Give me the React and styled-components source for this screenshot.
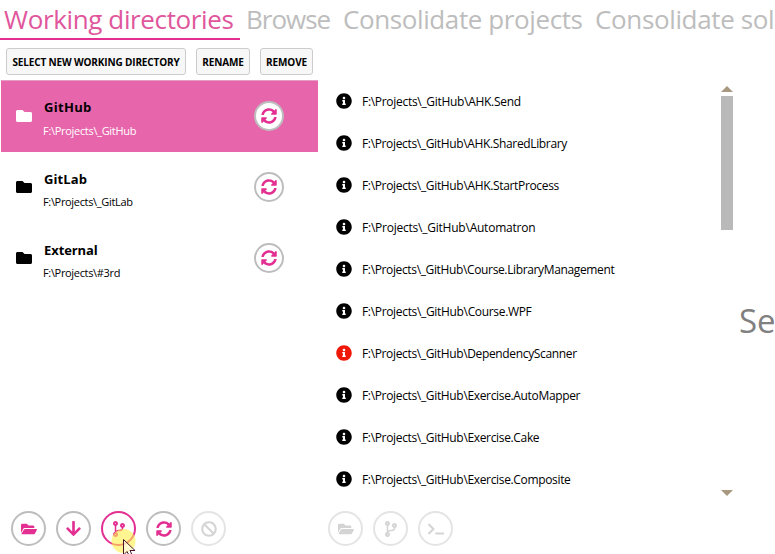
import React from "react";
import styled, { createGlobalStyle, css } from "styled-components";
import {
  FaFolder,
  FaFolderOpen,
  FaArrowDown,
  FaCodeBranch,
  FaSyncAlt,
  FaBan,
  FaTerminal,
  FaInfoCircle,
} from "react-icons/fa";

const PINK = "#e32f92";

const GlobalStyle = createGlobalStyle`
  *, *::before, *::after { box-sizing: border-box; }
  body {
    margin: 0;
    background: #fff;
    color: #000;
    font-family: "Open Sans", "Noto Sans", sans-serif;
    overflow: hidden;
  }
  svg { display: block; flex: none; }
`;

const Window = styled.div`
  position: relative;
  display: flex;
  flex-direction: column;
  width: 775px;
  height: 554px;
  background: #fff;
  overflow: hidden;
`;

const Tabs = styled.nav`
  display: flex;
  flex: none;
  height: 40px;
  white-space: nowrap;
`;

const Tab = styled.div`
  flex: none;
  width: ${(p) => p.$width}px;
  height: 40px;
  padding-left: ${(p) => p.$indent ?? 4}px;
  font-size: 26px;
  line-height: 39px;
  letter-spacing: ${(p) => p.$spacing}px;
  color: ${(p) => (p.$active ? "#e0569c" : "#bdbdbd")};
  border-bottom: 2px solid ${(p) => (p.$active ? PINK : "transparent")};
`;

const Body = styled.main`
  display: flex;
  flex: 1;
  min-height: 0;
`;

const Sidebar = styled.section`
  display: flex;
  flex-direction: column;
  flex: none;
  width: 318px;
  padding-top: 8px;
`;

const Toolbar = styled.div`
  display: flex;
  gap: 10px;
  padding-left: 6px;
  height: 32px;
`;

const TextButton = styled.button`
  width: ${(p) => p.$width}px;
  height: 27px;
  padding: 1px 0 0;
  border: 1px solid #ccc;
  border-radius: 3px;
  background: #f7f7f7;
  color: #000;
  font: bold 10px/24px "Open Sans", "Noto Sans", sans-serif;
  letter-spacing: ${(p) => p.$spacing}px;
  white-space: nowrap;
`;

const DirectoryList = styled.div`
  display: flex;
  flex-direction: column;
  flex: 1;
  padding-left: 1px;
`;

const Directory = styled.div`
  display: flex;
  align-items: center;
  height: ${(p) => (p.$selected ? 72 : 71)}px;
  padding: 0 34px 2px 15px;
  color: #000;
  > svg { color: #000; }
  ${(p) =>
    p.$selected &&
    css`
      background: #e765ab;
      border-top: 1px solid #e79cc4;
      > svg { color: #fff; }
    `}
`;

const DirectoryText = styled.div`
  flex: 1;
  padding: ${(p) => (p.$selected ? 5 : 6)}px 0 0 11px;
  white-space: nowrap;
`;

const DirectoryName = styled.div`
  padding-left: 1px;
  font-size: 13px;
  font-weight: 700;
  line-height: 20px;
  letter-spacing: ${(p) => p.$spacing}px;
`;

const DirectoryPath = styled.div`
  margin-top: ${(p) => (p.$selected ? 5 : 4)}px;
  font-size: 11px;
  line-height: 18px;
  letter-spacing: ${(p) => p.$spacing}px;
  color: ${(p) => (p.$selected ? "#fff" : "#000")};
`;

const RoundButton = styled.button`
  display: flex;
  align-items: center;
  justify-content: center;
  flex: none;
  width: ${(p) => p.$size}px;
  height: ${(p) => p.$size}px;
  padding: 0;
  border: 2px solid ${(p) => (p.$hot ? PINK : "#bdbdbd")};
  border-radius: 50%;
  background: #fff;
  color: ${PINK};
  ${(p) =>
    p.$disabled &&
    css`
      border-color: #e4e4e4;
      color: #d4d4d4;
    `}
`;

const Footer = styled.footer`
  display: flex;
  gap: 10px;
  flex: none;
  height: 43px;
  padding-left: ${(p) => p.$indent}px;
`;

const Projects = styled.section`
  display: flex;
  flex-direction: column;
  flex: none;
  width: 417px;
  padding-top: 40px;
`;

const ProjectArea = styled.div`
  display: flex;
  flex: 1;
  min-height: 0;
  padding-left: 18px;
`;

const ProjectList = styled.div`
  flex: 1;
  height: 422px;
  overflow: hidden;
`;

const Project = styled.div`
  display: flex;
  align-items: center;
  gap: 10px;
  height: 42px;
  font-size: 12px;
  letter-spacing: ${(p) => p.$spacing}px;
  white-space: nowrap;
  > svg { color: ${(p) => (p.$alert ? "#f01808" : "#000")}; }
`;

const ScrollBar = styled.div`
  display: flex;
  flex-direction: column;
  justify-content: space-between;
  align-items: center;
  width: 12px;
  height: 410px;
  margin: 6px 2px 0 0;
`;

const ScrollThumb = styled.div`
  width: 12px;
  height: 134px;
  margin: 4px 0 auto;
  background: #b9b9b9;
`;

const Arrow = styled.div`
  width: 0;
  height: 0;
  border: 6px solid transparent;
  border-top-width: ${(p) => (p.$down ? 6 : 0)}px;
  border-bottom-width: ${(p) => (p.$down ? 0 : 6)}px;
  border-${(p) => (p.$down ? "top" : "bottom")}-color: #a89880;
`;

const Details = styled.aside`
  flex: 1;
  min-width: 0;
  padding: 257px 0 0 4px;
  color: #808080;
  font-size: 33px;
  line-height: 48px;
  white-space: nowrap;
`;

const Pointer = styled.svg`
  position: absolute;
  left: 108px;
  top: 524px;
`;

const directories = [
  { name: "GitHub", path: "F:\\Projects\\_GitHub", selected: true, ns: 0.3, ps: -0.3 },
  { name: "GitLab", path: "F:\\Projects\\_GitLab", ns: 0.1, ps: -0.33 },
  { name: "External", path: "F:\\Projects\\#3rd", ns: -0.08, ps: -0.33 },
];

const projects = [
  ["AHK.Send", -0.3],
  ["AHK.SharedLibrary", -0.35],
  ["AHK.StartProcess", -0.34],
  ["Automatron", -0.23],
  ["Course.LibraryManagement", -0.36],
  ["Course.WPF", -0.33],
  ["DependencyScanner", -0.35],
  ["Exercise.AutoMapper", -0.34],
  ["Exercise.Cake", -0.34],
  ["Exercise.Composite", -0.34],
];

export default function App() {
  return (
    <>
      <GlobalStyle />
      <Window>
        <Tabs>
          <Tab $active $width={240} $spacing={-0.37}>Working directories</Tab>
          <Tab $width={99} $indent={6} $spacing={-1}>Browse</Tab>
          <Tab $width={252} $spacing={-0.4}>Consolidate projects</Tab>
          <Tab $width={184} $spacing={-0.36}>Consolidate sol</Tab>
        </Tabs>
        <Body>
          <Sidebar>
            <Toolbar>
              <TextButton $width={180} $spacing={-0.14}>SELECT NEW WORKING DIRECTORY</TextButton>
              <TextButton $width={54} $spacing={-0.1}>RENAME</TextButton>
              <TextButton $width={53} $spacing={-0.1}>REMOVE</TextButton>
            </Toolbar>
            <DirectoryList>
              {directories.map((d) => (
                <Directory key={d.name} $selected={d.selected}>
                  <FaFolder size={16} />
                  <DirectoryText $selected={d.selected}>
                    <DirectoryName $spacing={d.ns}>{d.name}</DirectoryName>
                    <DirectoryPath $selected={d.selected} $spacing={d.ps}>{d.path}</DirectoryPath>
                  </DirectoryText>
                  <RoundButton $size={30}><FaSyncAlt size={16} /></RoundButton>
                </Directory>
              ))}
            </DirectoryList>
            <Footer $indent={11}>
              <RoundButton $size={35}><FaFolderOpen size={16} /></RoundButton>
              <RoundButton $size={35}><FaArrowDown size={17} /></RoundButton>
              <RoundButton $size={35} $hot><FaCodeBranch size={16} /></RoundButton>
              <RoundButton $size={35}><FaSyncAlt size={16} /></RoundButton>
              <RoundButton $size={35} $disabled><FaBan size={16} /></RoundButton>
            </Footer>
          </Sidebar>
          <Projects>
            <ProjectArea>
              <ProjectList>
                {projects.map(([name, spacing]) => (
                  <Project key={name} $alert={name === "DependencyScanner"} $spacing={spacing}>
                    <FaInfoCircle size={16} />
                    {"F:\\Projects\\_GitHub\\" + name}
                  </Project>
                ))}
              </ProjectList>
              <ScrollBar>
                <Arrow />
                <ScrollThumb />
                <Arrow $down />
              </ScrollBar>
            </ProjectArea>
            <Footer $indent={10}>
              <RoundButton $size={35} $disabled><FaFolderOpen size={16} /></RoundButton>
              <RoundButton $size={35} $disabled><FaCodeBranch size={16} /></RoundButton>
              <RoundButton $size={35} $disabled><FaTerminal size={16} /></RoundButton>
            </Footer>
          </Projects>
          <Details>Se</Details>
        </Body>
        <Pointer width="30" height="30" viewBox="0 0 30 30">
          <circle cx="15.5" cy="17" r="12" fill="#fff04a" fillOpacity="0.6" />
          <path d="M15.5 15.5V31L19 27.5L22.5 34L25 33L22 26.5H27Z" fill="#fff" fillOpacity="0.55" stroke="#4b1226" />
        </Pointer>
      </Window>
    </>
  );
}
